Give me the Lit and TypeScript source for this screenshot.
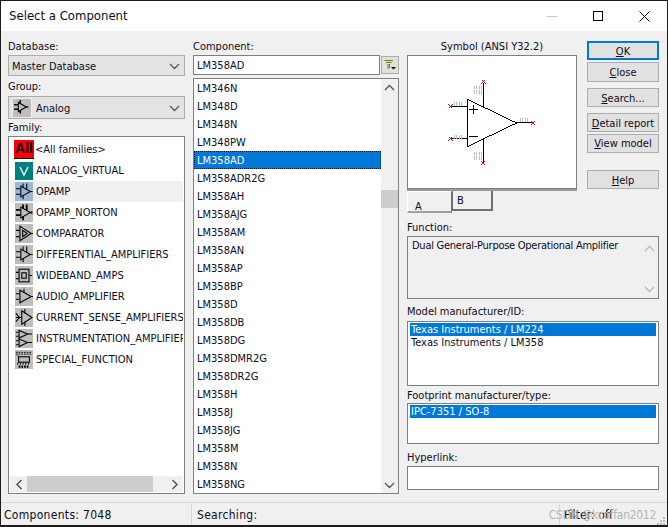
import { LitElement, html, css, svg } from "lit";
import { customElement } from "lit/decorators.js";

const famIcon = (i: number) => {
  const s = "stroke:#000;fill:none;stroke-width:1.2";
  const t = "stroke:#000;fill:none;stroke-width:2";
  const opamp = svg`<path d="M6.5 4.5 L6.5 16.5 L17 10.5 Z" style=${s}/><path d="M1 7.5H6M1 13.5H6M17 10.5H19.5M9 1.5V6M13 1.5V8M9 15V19" style=${s}/>`;
  const shapes = [
    opamp,
    svg`<path d="M6.5 4.5 L6.5 16.5 L17 10.5 Z" style=${s}/><path d="M1 7.5H6M1 13.5H6M17 10.5H19.5M9 1.5V6M13 1.5V8M9 15V19" style=${t}/>`,
    svg`<path d="M5.5 2.5 L5.5 18.5 L18 10.5 Z" style=${s}/><path d="M8.5 7 L8.5 14 L13.5 10.5 Z" style=${s}/><path d="M1 7H5M1 14H5M18 10.5H20" style=${s}/>`,
    opamp,
    svg`<rect x="4.5" y="3.5" width="11" height="14" style=${s}/><rect x="7.5" y="7.5" width="5" height="6" style=${s}/><path d="M1 7H4M1 14H4M16 10.5H19" style=${s}/>`,
    svg`<path d="M5.5 3.5 L5.5 17.5 L18 10.5 Z" style=${s}/><path d="M1 7.5H5M1 13.5H5M18 10.5H20M10 2V6" style=${s}/>`,
    svg`<path d="M7.5 3 L7.5 18 L19 10.5 Z" style=${s}/><path d="M1 6L5 10.5L1 15M1 10.5H7M11 1V6M11 15V20" style=${s}/>`,
    svg`<path d="M4.5 1.5 L4.5 10 L14 5.5 Z" style=${s}/><path d="M4.5 11 L4.5 19.5 L14 15 Z" style=${s}/><path d="M1 3.5H4M1 8H4M1 13H4M1 17.5H4M14 5.5H19M14 15H19" style=${s}/>`,
    svg`<path d="M1 2.5H19M1 4.5H19" style="stroke:#000;stroke-dasharray:2 1"/><rect x="4" y="7.5" width="12" height="6" style="fill:none;stroke:#000;stroke-width:1.2"/><path d="M3 6V7M3 14V16M6 14V16M9 14V16M12 14V16M15 14V16" style=${s}/><path d="M4 18.5H16" style="stroke:#000;stroke-width:2.4;stroke-dasharray:2 1"/>`,
  ];
  return svg`<svg class="ic" viewBox="0 0 20 21">${shapes[i]}</svg>`;
};

const families: string[] = [
  "OPAMP", "OPAMP_NORTON", "COMPARATOR", "DIFFERENTIAL_AMPLIFIERS", "WIDEBAND_AMPS",
  "AUDIO_AMPLIFIER", "CURRENT_SENSE_AMPLIFIERS", "INSTRUMENTATION_AMPLIFIERS", "SPECIAL_FUNCTION",
];

const parts = [
  "LM346N","LM348D","LM348N","LM348PW","LM358AD","LM358ADR2G","LM358AH","LM358AJG","LM358AM",
  "LM358AN","LM358AP","LM358BP","LM358D","LM358DB","LM358DG","LM358DMR2G","LM358DR2G","LM358H",
  "LM358J","LM358JG","LM358M","LM358N","LM358NG",
];

const chev = (up = false, c = "#555") => html`<svg class="chev" width="11" height="7" viewBox="0 0 11 7">
  <path d=${up ? "M1 6L5.5 1.5L10 6" : "M1 1L5.5 5.5L10 1"} fill="none" stroke=${c} stroke-width="1.3"/></svg>`;

const pin = (x: number, y: number) => svg`<path d="M${x - 2} ${y - 2}l4 4M${x + 2} ${y - 2}l-4 4" stroke="#e00000" fill="none"/>`;
const mark = (x: number, y: number) => svg`<path d="M${x} ${y}v4M${x + 2} ${y}v4M${x + 5} ${y}v4M${x + 7} ${y}v4" stroke="#bcbcbc" fill="none"/>`;

@customElement("app-root")
export class AppRoot extends LitElement {
  static styles = css`
    :host {
      display: block;
      width: 668px;
      height: 527px;
      box-sizing: border-box;
      border: 1px solid #1c1c1c;
      border-width: 1px 1px 2px 1px;
      background: #f0f0f0;
      font: 11px "DejaVu Sans", Tahoma, sans-serif;
      font-stretch: condensed;
      color: #0c0c1c;
      overflow: hidden;
      position: relative;
    }
    .title { height: 30px; box-sizing: border-box; background: #fff; display: flex; align-items: center; padding-left: 8px; font-size: 13px; }
    .title > span:first-child { padding-bottom: 2px; }
    .title .sp { flex: 1; }
    .wc { display: flex; align-items: center; justify-content: center; width: 46px; height: 30px; }
    .main {
      display: grid;
      grid-template-columns: 177px 206px 252px;
      column-gap: 8px;
      padding: 7px 0 0 7px;
      height: 471px;
      box-sizing: border-box;
    }
    .col { display: flex; flex-direction: column; min-width: 0; }
    label { display: block; height: 16px; line-height: 16px; }
    label.low { line-height: 18px; }
    .sel {
      display: flex; align-items: center; background: #e3e3e3; border: 1px solid #adadad;
      box-sizing: border-box; justify-content: space-between; padding: 1px 4px 0 3px;
    }
    .chev { display: block; }
    .db { height: 21px; margin: 1px 0 3px; }
    .grp { height: 23px; margin: 1px 0 0; justify-content: flex-start; }
    .grp .thumb { width: 18px; height: 18px; background: #bdbdbd; border: 1px solid #eee; display: flex; margin-right: 4px; }
    .grp .chev { margin-left: auto; }
    .box { border: 2px solid #7f7f7f; box-sizing: border-box; background: #fff; border-width: 1.5px; }
    .fam { height: 358px; position: relative; overflow: hidden; padding: 2px 1px 0; margin-top: 1px; }
    .fr { height: 21px; display: flex; align-items: center; padding-left: 5px; white-space: nowrap; overflow: hidden; }
    .fr.sel2 { background: #f0f0f0; }
    .ic { background: #bdbdbd; width: 18px; height: 19px; flex: none; margin-right: 3px; display: block; }
    .fr.sel2 .ic { background: #9ab7d4; }
    .allic { background: #ff0000; color: #000; font: bold 14px "Liberation Sans", sans-serif; width: 20px; height: 19px; margin-left: -1px; border-bottom: 1.5px solid #000; line-height: 17px; text-align: center; margin-right: 1px; box-sizing: border-box; flex: none; }
    .vic { background: #007f7f; width: 18px; height: 18px; margin-right: 3px; flex: none; display: block; }
    .hs { position: absolute; left: 1px; right: 1px; bottom: 1px; height: 16px; background: #f0f0f0; display: flex; align-items: center; justify-content: space-between; }
    .hs .th { position: absolute; left: 17px; width: 126px; top: 0; bottom: 0; background: #cdcdcd; }
    .hs .a { width: 17px; display: flex; justify-content: center; }
    .hs .a svg { display: block; }
    .row { display: flex; margin-top: 1px; }
    .cinput { flex: 1; height: 20px; padding: 0 3px; line-height: 20px; }
    .fbtn { width: 18px; height: 18px; margin: 1px 0 0 1px; background: #e1e1e1; border: 1px solid #adadad; box-sizing: border-box; display: flex; align-items: center; justify-content: center; }
    .parts { position: relative; height: 416px; margin-top: 3px; overflow: hidden; }
    .pr { height: 18px; line-height: 20px; padding-left: 3px; margin-right: 17px; }
    .pr.on { background: #0078d7; color: #fff; outline: 1px dotted #001c44; outline-offset: -1px; }
    .vs { position: absolute; top: 0; right: 0; bottom: 0; width: 17px; background: #f0f0f0; display: flex; flex-direction: column; align-items: center; justify-content: space-between; padding: 5px 0 4px; box-sizing: border-box; }
    .vs .t { position: absolute; top: 111px; left: 0; right: 0; height: 18px; background: #cdcdcd; }
    .sym-top { display: flex; gap: 10px; }
    .sym { width: 170px; }
    .sym-l { text-align: center; height: 16px; line-height: 18px; margin-bottom: 1px; }
    .prev { width: 170px; height: 134px; background: #fff; border: 1px solid #7f7f7f; box-sizing: border-box; display: block; shape-rendering: crispEdges; }
    .btns { width: 73px; display: flex; flex-direction: column; }
    .btn { background: #e1e1e1; border: 1px solid #adadad; box-sizing: border-box; display: flex; align-items: center; justify-content: center; height: 19px; padding-top: 1px; }
    .btn.def { border: 2px solid #0078d7; margin-top: 3px; }
    .m1 { margin-top: 2px; height: 20px; padding-top: 0; }
    .m2 { margin-top: 6px; }
    .m3 { margin-top: 6px; }
    .m4 { margin-top: 2px; padding-top: 0; }
    .m5 { margin-top: 17px; }
    .tabs { display: flex; height: 22px; position: relative; }
    .tab { width: 45px; background: #f0f0f0; border: 1px solid #fff; border-right: 1px solid #707070; border-bottom: 2px solid #a0a0a0; box-sizing: border-box; padding: 8px 0 0 7px; }
    .tab.b { width: 41px; height: 20px; border: 1px solid #707070; border-width: 0 2px 2px 1px; padding: 3px 0 0 4px; }
    .tabline { width: 170px; height: 2px; background: #9a9a9a; }
    .lb1 { margin-top: 7px; }
    .lb2 { margin-top: 5px; }
    .lb3 { margin: 2px 0 -2px; }
    .lb4 { margin-top: 6px; }
    .fn { height: 63px; position: relative; padding: 2px 4px; background: #f0f0f0; margin-top: 0; letter-spacing: -0.26px; }
    .fn .sb { position: absolute; right: 0; top: 0; bottom: 0; width: 17px; display: flex; flex-direction: column; align-items: center; justify-content: space-between; padding: 8px 0 5px; box-sizing: border-box; }
    .lb { padding: 1px 2px; margin-top: 1px; }
    .lbh1 { height: 65px; }
    .lbh2 { height: 41px; }
    .hl { height: 24px; }
    .lr { height: 13px; line-height: 13px; padding-left: 1px; white-space: nowrap; }
    .lr.on { background: #0078d7; color: #fff; }
    .status { border-top: 1px solid #d8d8d8; height: 24px; display: flex; align-items: center; position: relative; font-size: 12px; letter-spacing: 0.3px; }
    .st1 { width: 190px; padding-left: 3px; box-sizing: border-box; }
    .st2 { flex: 1; border-left: 1px solid #d8d8d8; height: 22px; line-height: 22px; padding-left: 5px; }
    .st3 { width: 108px; border-left: 1px solid #d8d8d8; height: 22px; line-height: 22px; padding-left: 4px; box-sizing: border-box; color: #000; letter-spacing: 0.1px; }
    .wm { position: absolute; right: 11px; top: 1px; color: #b5b5b5; font-size: 12px; line-height: 22px; letter-spacing: -0.3px; }
    .grip { position: absolute; right: 1px; bottom: 1px; }
  `;

  render() {
    return html`
      <div class="title">
        <span>Select a Component</span><span class="sp"></span>
        <div class="wc"><svg width="10" height="10" viewBox="0 0 10 10"><path d="M0 5.5H10" stroke="#c8c8c8"/></svg></div>
        <div class="wc"><svg width="10" height="10" viewBox="0 0 10 10"><rect x=".5" y=".5" width="9" height="9" fill="none" stroke="#000"/></svg></div>
        <div class="wc"><svg width="11" height="11" viewBox="0 0 11 11"><path d="M.5 .5L10.5 10.5M10.5 .5L.5 10.5" stroke="#000" fill="none"/></svg></div>
      </div>
      <div class="main">
        <div class="col">
          <label class="low">Database:</label>
          <div class="sel db"><span>Master Database</span>${chev()}</div>
          <label>Group:</label>
          <div class="sel grp">
            <span class="thumb"><svg width="16" height="16" viewBox="0 0 20 21"><path d="M6.5 4.5 L6.5 16.5 L17 10.5 Z" fill="none" stroke="#000" stroke-width="1.4"/><path d="M1 7.5H6M1 13.5H6M17 10.5H19.5M9 1.5V6M9 15V19" stroke="#000" stroke-width="2" fill="none"/></svg></span>
            <span>Analog</span>${chev()}
          </div>
          <label class="low">Family:</label>
          <div class="box fam">
            <div class="fr"><span class="allic">All</span><span>&lt;All families&gt;</span></div>
            <div class="fr"><svg class="vic" viewBox="0 0 18 18"><path d="M5 5L9 13L13 5" fill="none" stroke="#fff" stroke-width="1.3"/></svg><span>ANALOG_VIRTUAL</span></div>
            ${families.map((f, i) => html`<div class="fr ${i === 0 ? "sel2" : ""}">${famIcon(i)}<span>${f}</span></div>`)}
            <div class="hs">
              <span class="a"><svg width="8" height="11" viewBox="0 0 8 11"><path d="M6.5 1L2 5.5L6.5 10" fill="none" stroke="#555" stroke-width="1.5"/></svg></span>
              <span class="th"></span>
              <span class="a"><svg width="8" height="11" viewBox="0 0 8 11"><path d="M1.5 1L6 5.5L1.5 10" fill="none" stroke="#555" stroke-width="1.5"/></svg></span>
            </div>
          </div>
        </div>
        <div class="col">
          <label class="low">Component:</label>
          <div class="row">
            <div class="box cinput">LM358AD</div>
            <div class="fbtn"><svg width="12" height="10" viewBox="0 0 12 10"><path d="M.5 .5H9M2 2.5H7.5M4 4V9M5.5 4V8" stroke="#7c7c00" fill="none"/><path d="M7 7H12L9.5 9.5Z" fill="#000"/></svg></div>
          </div>
          <div class="box parts">
            <div>${parts.map((p) => html`<div class="pr ${p === "LM358AD" ? "on" : ""}">${p}</div>`)}</div>
            <div class="vs"><span class="t"></span>${chev(true)}${chev()}</div>
          </div>
        </div>
        <div class="col">
          <div class="sym-top">
            <div class="sym">
              <div class="sym-l">Symbol (ANSI Y32.2)</div>
              <svg class="prev" viewBox="0 0 170 134">
                <path d="M60 44V92L110 68Z" fill="none" stroke="#000"/>
                <path d="M43 51H60M43 84H60M76 27V52M76 84V109M110 68H127M62 54.5H71M66.5 50V59M62 82H71" fill="none" stroke="#000"/>
                ${pin(43, 51)}${pin(43, 84)}${pin(76, 26)}${pin(76, 109)}${pin(127, 68)}
                ${mark(47, 47)}${mark(47, 80)}${mark(114, 63)}
                ${mark(67, 30)}${mark(67, 35)}${mark(67, 97)}${mark(67, 102)}
              </svg>
            </div>
            <div class="btns">
              <div class="btn def"><span><u>O</u>K</span></div>
              <div class="btn m1"><span><u>C</u>lose</span></div>
              <div class="btn m2"><span><u>S</u>earch...</span></div>
              <div class="btn m3"><span><u>D</u>etail report</span></div>
              <div class="btn m4"><span><u>V</u>iew model</span></div>
              <div class="btn m5"><span><u>H</u>elp</span></div>
            </div>
          </div>
          <div class="tabline"></div>
          <div class="tabs"><div class="tab">A</div><div class="tab b">B</div></div>
          <label class="lb1">Function:</label>
          <div class="box fn">Dual General-Purpose Operational Amplifier
            <div class="sb">${chev(true, "#bbb")}${chev(false, "#bbb")}</div>
          </div>
          <label class="lb2">Model manufacturer/ID:</label>
          <div class="box lb lbh1">
            <div class="lr on">Texas Instruments / LM224</div>
            <div class="lr">Texas Instruments / LM358</div>
          </div>
          <label class="lb3">Footprint manufacturer/type:</label>
          <div class="box lb lbh2"><div class="lr on">IPC-7351 / SO-8</div></div>
          <label class="lb4">Hyperlink:</label>
          <div class="box hl"></div>
        </div>
      </div>
      <div class="status">
        <div class="st1">Components: 7048</div>
        <div class="st2">Searching:</div>
        <div class="st3">Filter: off</div>
        <div class="wm">CSDN @kcoffan2012</div>
        <svg class="grip" width="11" height="11" viewBox="0 0 11 11"><path d="M8 2h2v2h-2zM5 5h2v2h-2zM8 5h2v2h-2zM2 8h2v2h-2zM5 8h2v2h-2zM8 8h2v2h-2z" fill="#bdbdbd"/></svg>
      </div>
    `;
  }
}
